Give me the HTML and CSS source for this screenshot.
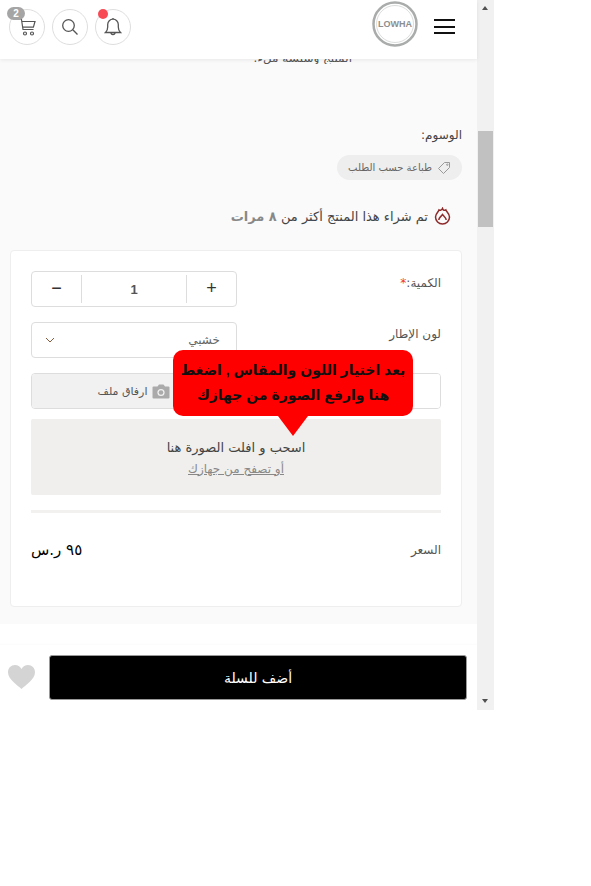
FILE: index.html
```html
<!DOCTYPE html>
<html lang="ar">
<head>
<meta charset="utf-8">
<title>LOWHA</title>
<link rel="stylesheet" href="styles.css">
</head>
<body>
<div class="frame">
  <div class="main">
    <header class="header">
      <div class="actions">
        <a class="circle">
          <span class="count">2</span>
          <svg width="20" height="20" viewBox="0 0 20 20" fill="none" stroke="#555" stroke-width="1.2"><path d="M1 2h3.4l1.6 10.5h10.5"/><path d="M5 4.5h13l-1.6 5.6H5.800"/><circle cx="8" cy="16.500" r="1.500"/><circle cx="15" cy="16.500" r="1.500"/></svg>
        </a>
        <a class="circle">
          <svg width="18" height="18" viewBox="0 0 18 18" fill="none" stroke="#555" stroke-width="1.300"><circle cx="7.500" cy="7.500" r="5.800"/><path d="M11.800 11.800L16.500 16.500"/></svg>
        </a>
        <a class="circle">
          <span class="dot"></span>
          <svg width="18" height="20" viewBox="0 0 18 20" fill="none" stroke="#555" stroke-width="1.300"><path d="M1.500 15.500c1.600-1.400 2.200-3 2.200-5.500V7.500a5.300 5.300 0 0 1 10.600 0V10c0 2.500.6 4.100 2.200 5.500z"/><path d="M7 15.500a2 2 0 0 0 4 0"/><path d="M9 1v1"/></svg>
        </a>
      </div>
      <div class="brand">
        <div class="logo"><svg class="logo-ring" width="46" height="46" viewBox="0 0 46 46" fill="none"><circle cx="23" cy="23" r="21.500" stroke="#a9acab" stroke-width="2.500"/><circle cx="23" cy="23" r="18.500" stroke="#dcdddd" stroke-width="1"/></svg><span class="logo-text">LOWHA</span></div>
        <div class="burger"><i></i><i></i><i></i></div>
      </div>
    </header>

    <div class="content">
      <div class="clipped"><p>المنتج وسلسة ملء.</p></div>
      <div class="tags-label">الوسوم:</div>
      <div class="tags">
        <span class="tag">
          <svg width="14" height="14" viewBox="0 0 14 14" fill="none" stroke="#999" stroke-width="1"><path d="M7.500 1.500h5v5l-6 6-5-5z"/><circle cx="10.300" cy="3.700" r=".7"/></svg>
          طباعة حسب الطلب
        </span>
      </div>
      <div class="sold">
        <svg width="17" height="18" viewBox="0 0 17 18" fill="none" stroke="#8f2a2a" stroke-width="1.500"><path d="M8.500 1.500c.5 2 2 2 3.300 1.300.3 1.500 3.700 3.500 3.700 7.200a7 7 0 0 1-14 0c0-3.500 3-5 3.500-7 .8.500 2.500 .5 3.500-1.500z"/><path d="M4.800 13c0-2.500 2-3 3.700-5.500 1.500 2 3.700 3 3.700 5.500"/></svg>
        <span>تم شراء هذا المنتج أكثر من <b>٨ مرات</b></span>
      </div>

      <section class="card">
        <div class="row">
          <label class="label">الكمية:<em>*</em></label>
          <div class="stepper">
            <span class="step">+</span>
            <span class="qty">1</span>
            <span class="step">−</span>
          </div>
        </div>
        <div class="row row-select">
          <label class="label">لون الإطار</label>
          <div class="select">
            <span>خشبي</span>
            <svg width="10" height="6" viewBox="0 0 10 6" fill="none" stroke="#8a5a3c" stroke-width="1"><path d="M1 1l4 4 4-4"/></svg>
          </div>
        </div>
        <div class="upload">
          <div class="file-name"></div>
          <div class="attach">
            <svg width="18" height="15" viewBox="0 0 18 15"><path fill="#aaa" d="M1.500 2.500h4L7 .5h4.500l1.500 2h3.500a1 1 0 0 1 1 1v10a1 1 0 0 1-1 1h-15a1 1 0 0 1-1-1v-10a1 1 0 0 1 1-1z"/><circle cx="9" cy="8.500" r="3.600" fill="#f0f0f0"/><circle cx="9" cy="8.500" r="2.300" fill="#aaa"/></svg>
            <span>ارفاق ملف</span>
          </div>
        </div>
        <div class="drop">
          <div class="drop-title">اسحب و افلت الصورة هنا</div>
          <a class="drop-link">أو تصفح من جهازك</a>
        </div>
        <div class="rule"></div>
        <div class="price-row">
          <span class="label">السعر</span>
          <strong class="price">٩٥ ر.س</strong>
        </div>
      </section>

      <div class="tip">
        بعد اختيار اللون والمقاس , اضغط<br>هنا وارفع الصورة من جهازك
      </div>
    </div>

    <div class="gap"></div>
    <footer class="footer">
      <button class="add">أضف للسلة</button>
      <svg class="heart" width="27" height="24" viewBox="0 0 27 24"><path fill="#d4d4d4" d="M13.500 24C10 20.500 0 14.500 0 7.300 0 3 3.200 0 7 0c2.800 0 5 1.400 6.500 4C15 1.400 17.200 0 20 0c3.800 0 7 3 7 7.300C27 14.500 17 20.500 13.500 24z"/></svg>
    </footer>
  </div>
  <div class="scrollbar">
    <div class="arrow arrow-up"></div>
    <div class="track"><div class="thumb"></div></div>
    <div class="arrow arrow-down"></div>
  </div>
</div>
</body>
</html>
```

FILE: styles.css
```css
* { box-sizing: border-box; }
html, body { margin: 0; padding: 0; background: #fff; }
body { font-family: "DejaVu Sans", "Noto Sans", sans-serif; color: #333; }

.frame { display: flex; width: 494px; height: 710px; overflow: hidden; }
.main { width: 477px; height: 710px; display: flex; flex-direction: column; }

.header { position: relative; z-index: 2; flex: none; height: 59px; background: #fff; box-shadow: 0 1px 4px rgba(0,0,0,.08); display: flex; justify-content: space-between; padding: 9px 22px 0 9px; }
.actions { display: flex; gap: 7px; }
.circle { position: relative; width: 36px; height: 36px; border: 1px solid #dedede; border-radius: 50%; display: flex; align-items: center; justify-content: center; }
.count { position: absolute; top: -3px; left: -3px; width: 18px; height: 13px; border-radius: 7px; background: #a5a5a5; color: #fff; font: bold 10px/13px "Liberation Sans", sans-serif; text-align: center; }
.dot { position: absolute; top: -1px; left: 2px; width: 10px; height: 10px; border-radius: 50%; background: #f74a55; }
.brand { display: flex; gap: 16px; margin-top: -8px; }
.logo { position: relative; width: 46px; height: 46px; display: flex; align-items: center; justify-content: center; }
.logo-ring { position: absolute; top: 0; left: 0; }
.logo-text { position: relative; font: bold 9px/1 "Liberation Sans", sans-serif; color: #8c8f8f; }
.burger { width: 21px; height: 15px; margin-top: 18px; display: flex; flex-direction: column; justify-content: space-between; }
.burger i { display: block; height: 2px; background: #111; }

.content { position: relative; flex: none; height: 565px; background: #fafafa; padding: 0 15px 0 10px; direction: rtl; }
.clipped { height: 5px; overflow: hidden; }
.clipped p { margin: -10px 110px 0 0; font-size: 12px; line-height: 18px; color: #555; }
.tags-label { margin-top: 62px; font-size: 12px; line-height: 18px; color: #444; }
.tags { margin-top: 11px; display: flex; }
.tag { height: 25px; width: 125px; border-radius: 13px; background: #eee; display: flex; align-items: center; justify-content: center; gap: 5px; font-size: 10px; color: #666; }
.sold { margin-top: 26px; height: 20px; padding-right: 11px; display: flex; align-items: center; gap: 6px; font-size: 13px; color: #444; }
.sold b { font-weight: 700; color: #888; }

.card { margin-top: 24px; height: 357px; background: #fff; border: 1px solid #eee; border-radius: 4px; padding: 20px 20px 0; }
.row { display: flex; justify-content: space-between; align-items: flex-start; height: 36px; }
.row-select { margin-top: 15px; }
.label { font-size: 12px; line-height: 24px; color: #555; }
.label em { font-style: normal; color: #e33; }
.stepper { width: 206px; height: 36px; border: 1px solid #ddd; border-radius: 4px; display: flex; align-items: center; }
.step { width: 49px; height: 28px; font: 18px/26px "Liberation Sans", sans-serif; color: #333; text-align: center; }
.qty { flex: 1; height: 28px; border-left: 1px solid #ddd; border-right: 1px solid #ddd; text-align: center; font: bold 13px/30px "Liberation Sans", sans-serif; color: #555; }
.select { width: 206px; height: 36px; border: 1px solid #ddd; border-radius: 4px; padding: 0 16px 0 13px; display: flex; align-items: center; justify-content: space-between; font-size: 12px; color: #666; }
.upload { margin-top: 15px; height: 36px; border: 1px solid #ddd; border-radius: 4px; display: flex; overflow: hidden; }
.file-name { flex: 1; background: #fff; }
.attach { width: 205px; background: #f1f1f1; border-right: 1px solid #ddd; display: flex; align-items: center; justify-content: center; gap: 5px; font-size: 11px; color: #555; padding-right: 0; }
.drop { margin-top: 10px; height: 76px; background: #f0efed; border-radius: 2px; display: flex; flex-direction: column; align-items: center; justify-content: center; gap: 3px; padding-top: 2px; }
.drop-title { font-size: 13px; line-height: 18px; color: #444; }
.drop-link { font-size: 12px; line-height: 18px; color: #888; text-decoration: underline; }
.rule { margin-top: 15px; height: 3px; background: #f2f1ef; }
.price-row { margin-top: 25px; display: flex; justify-content: space-between; align-items: center; }
.price { font-size: 15px; font-weight: 400; color: #000; }

.tip { position: absolute; top: 291px; left: 173px; width: 240px; height: 66px; background: #f00; border-radius: 10px; color: #111; font: bold 14px/25px "Liberation Sans", "DejaVu Sans", sans-serif; text-align: center; padding-top: 8px; }
.tip::after { content: ""; position: absolute; top: 66px; left: 105px; border: 15px solid transparent; border-top: 20px solid #f00; border-bottom: 0; }

.gap { flex: none; height: 21px; background: #fff; }
.footer { flex: 1; background: #fff; box-shadow: 0 -1px 2px rgba(0,0,0,.02); display: flex; align-items: flex-start; justify-content: space-between; flex-direction: row-reverse; padding: 10px 10px 0 8px; }
.add { width: 418px; height: 45px; background: #000; border: 1px solid #999; border-radius: 3px; color: #fff; font: 14px "DejaVu Sans", sans-serif; }
.heart { margin-top: 10px; }

.scrollbar { width: 17px; height: 710px; background: #f1f1f1; display: flex; flex-direction: column; }
.arrow { flex: none; height: 17px; position: relative; }
.arrow-up::after, .arrow-down::after { content: ""; position: absolute; left: 5px; top: 6px; border: 3.500px solid transparent; }
.arrow-up::after { border-top: 0; border-bottom: 4px solid #505050; }
.arrow-down::after { border-bottom: 0; border-top: 4px solid #505050; }
.track { flex: 1; padding-top: 114px; }
.thumb { width: 15px; height: 96px; margin: 0 1px; background: #c1c1c1; }
```
